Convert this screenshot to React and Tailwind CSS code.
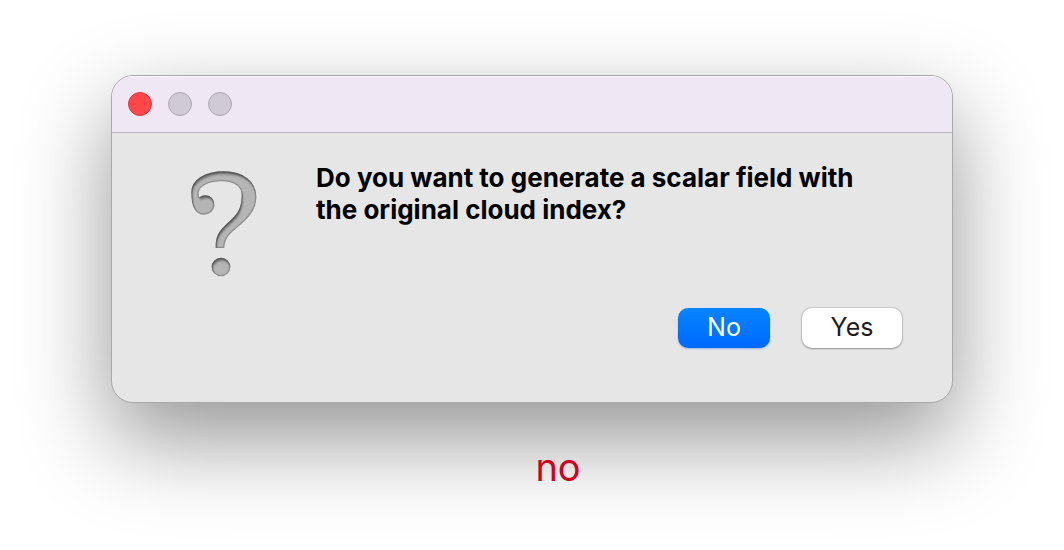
import React from "react";

function QuestionIcon() {
  return (
    <svg className="h-[106px] w-[68px]" viewBox="60 48 204 318" role="img" aria-label="Question">
      <defs>
        <filter id="bevel" x="-10%" y="-10%" width="120%" height="120%">
          <feComponentTransfer in="SourceAlpha" result="outside">
            <feFuncA type="table" tableValues="1 0" />
          </feComponentTransfer>
          <feGaussianBlur in="outside" stdDeviation="3" result="soft" />
          <feOffset in="soft" dx="3" dy="8" result="moved" />
          <feFlood floodColor="#404040" floodOpacity="0.8" />
          <feComposite in2="moved" operator="in" />
          <feComposite in2="SourceAlpha" operator="in" result="shade" />
          <feMerge>
            <feMergeNode in="SourceGraphic" />
            <feMergeNode in="shade" />
          </feMerge>
        </filter>
      </defs>
      <g fill="#b5b5b5" stroke="#8e8e8e" strokeWidth="4" filter="url(#bevel)">
        <path d="M66 112C66 75 105 51 162 51C218 51 257 80 257 126C257 165 232 190 205 212C180 232 162 248 161 277L139 277C137 240 155 222 180 200C205 178 217 160 217 120C217 95 195 77 155 77C115 77 87 92 84 112C83 124 86 130 92 127C96 123 103 123 107 123C121 123 131 133 131 149C131 166 118 177 101 177C78 177 66 155 66 112Z" />
        <circle cx="153" cy="336" r="26" />
      </g>
    </svg>
  );
}

export default function App() {
  return (
    <div className="flex min-h-screen flex-col items-center bg-white px-6 pt-[75px] font-['Inter',sans-serif]">
      <main
        role="dialog"
        aria-labelledby="message"
        className="w-full max-w-[842px] overflow-hidden rounded-[22px] border border-[#a9a9ab] bg-[#e6e6e6] shadow-[0_36px_90px_rgba(0,0,0,0.42)]"
      >
        <header className="flex h-[57px] items-center gap-4 border-b border-[#b9b6bd] bg-[#efe8f4] px-4 shadow-[inset_0_1px_0_#faf7fc]">
          <button aria-label="Close" className="size-6 rounded-full border border-[#dc3a3c] bg-[#ff4648]" />
          <button aria-label="Minimize" className="size-6 rounded-full border border-[#aca6b3] bg-[#d0cad7]" />
          <button aria-label="Zoom" className="size-6 rounded-full border border-[#aca6b3] bg-[#d0cad7]" />
        </header>
        <div className="flex items-start gap-[58px] pt-[29px] pr-12 pl-[78px]">
          <div className="shrink-0 pt-[9px]">
            <QuestionIcon />
          </div>
          <h1 id="message" className="max-w-[580px] text-[26px] leading-8 font-bold text-black">
            Do you want to generate a scalar field with the original cloud index?
          </h1>
        </div>
        <div className="flex justify-end gap-8 pt-[31px] pr-[50px] pb-[54px] text-[25px] leading-[38px]">
          <button className="h-10 w-[92px] rounded-[10px] bg-linear-to-b from-[#0a84ff] to-[#0069ff] pb-[2px] text-white shadow-[0_1px_2px_rgba(0,90,220,0.35)]">
            No
          </button>
          <button className="h-10 w-[100px] rounded-[10px] bg-white pb-[2px] text-[#1d1d1f] shadow-[0_0_1px_1px_rgba(0,0,0,0.12),0_1px_2px_rgba(0,0,0,0.25)]">
            Yes
          </button>
        </div>
      </main>
      <p className="relative pt-10 pl-[52px] text-[38px] leading-12 text-[#d0021b]">no</p>
    </div>
  );
}
